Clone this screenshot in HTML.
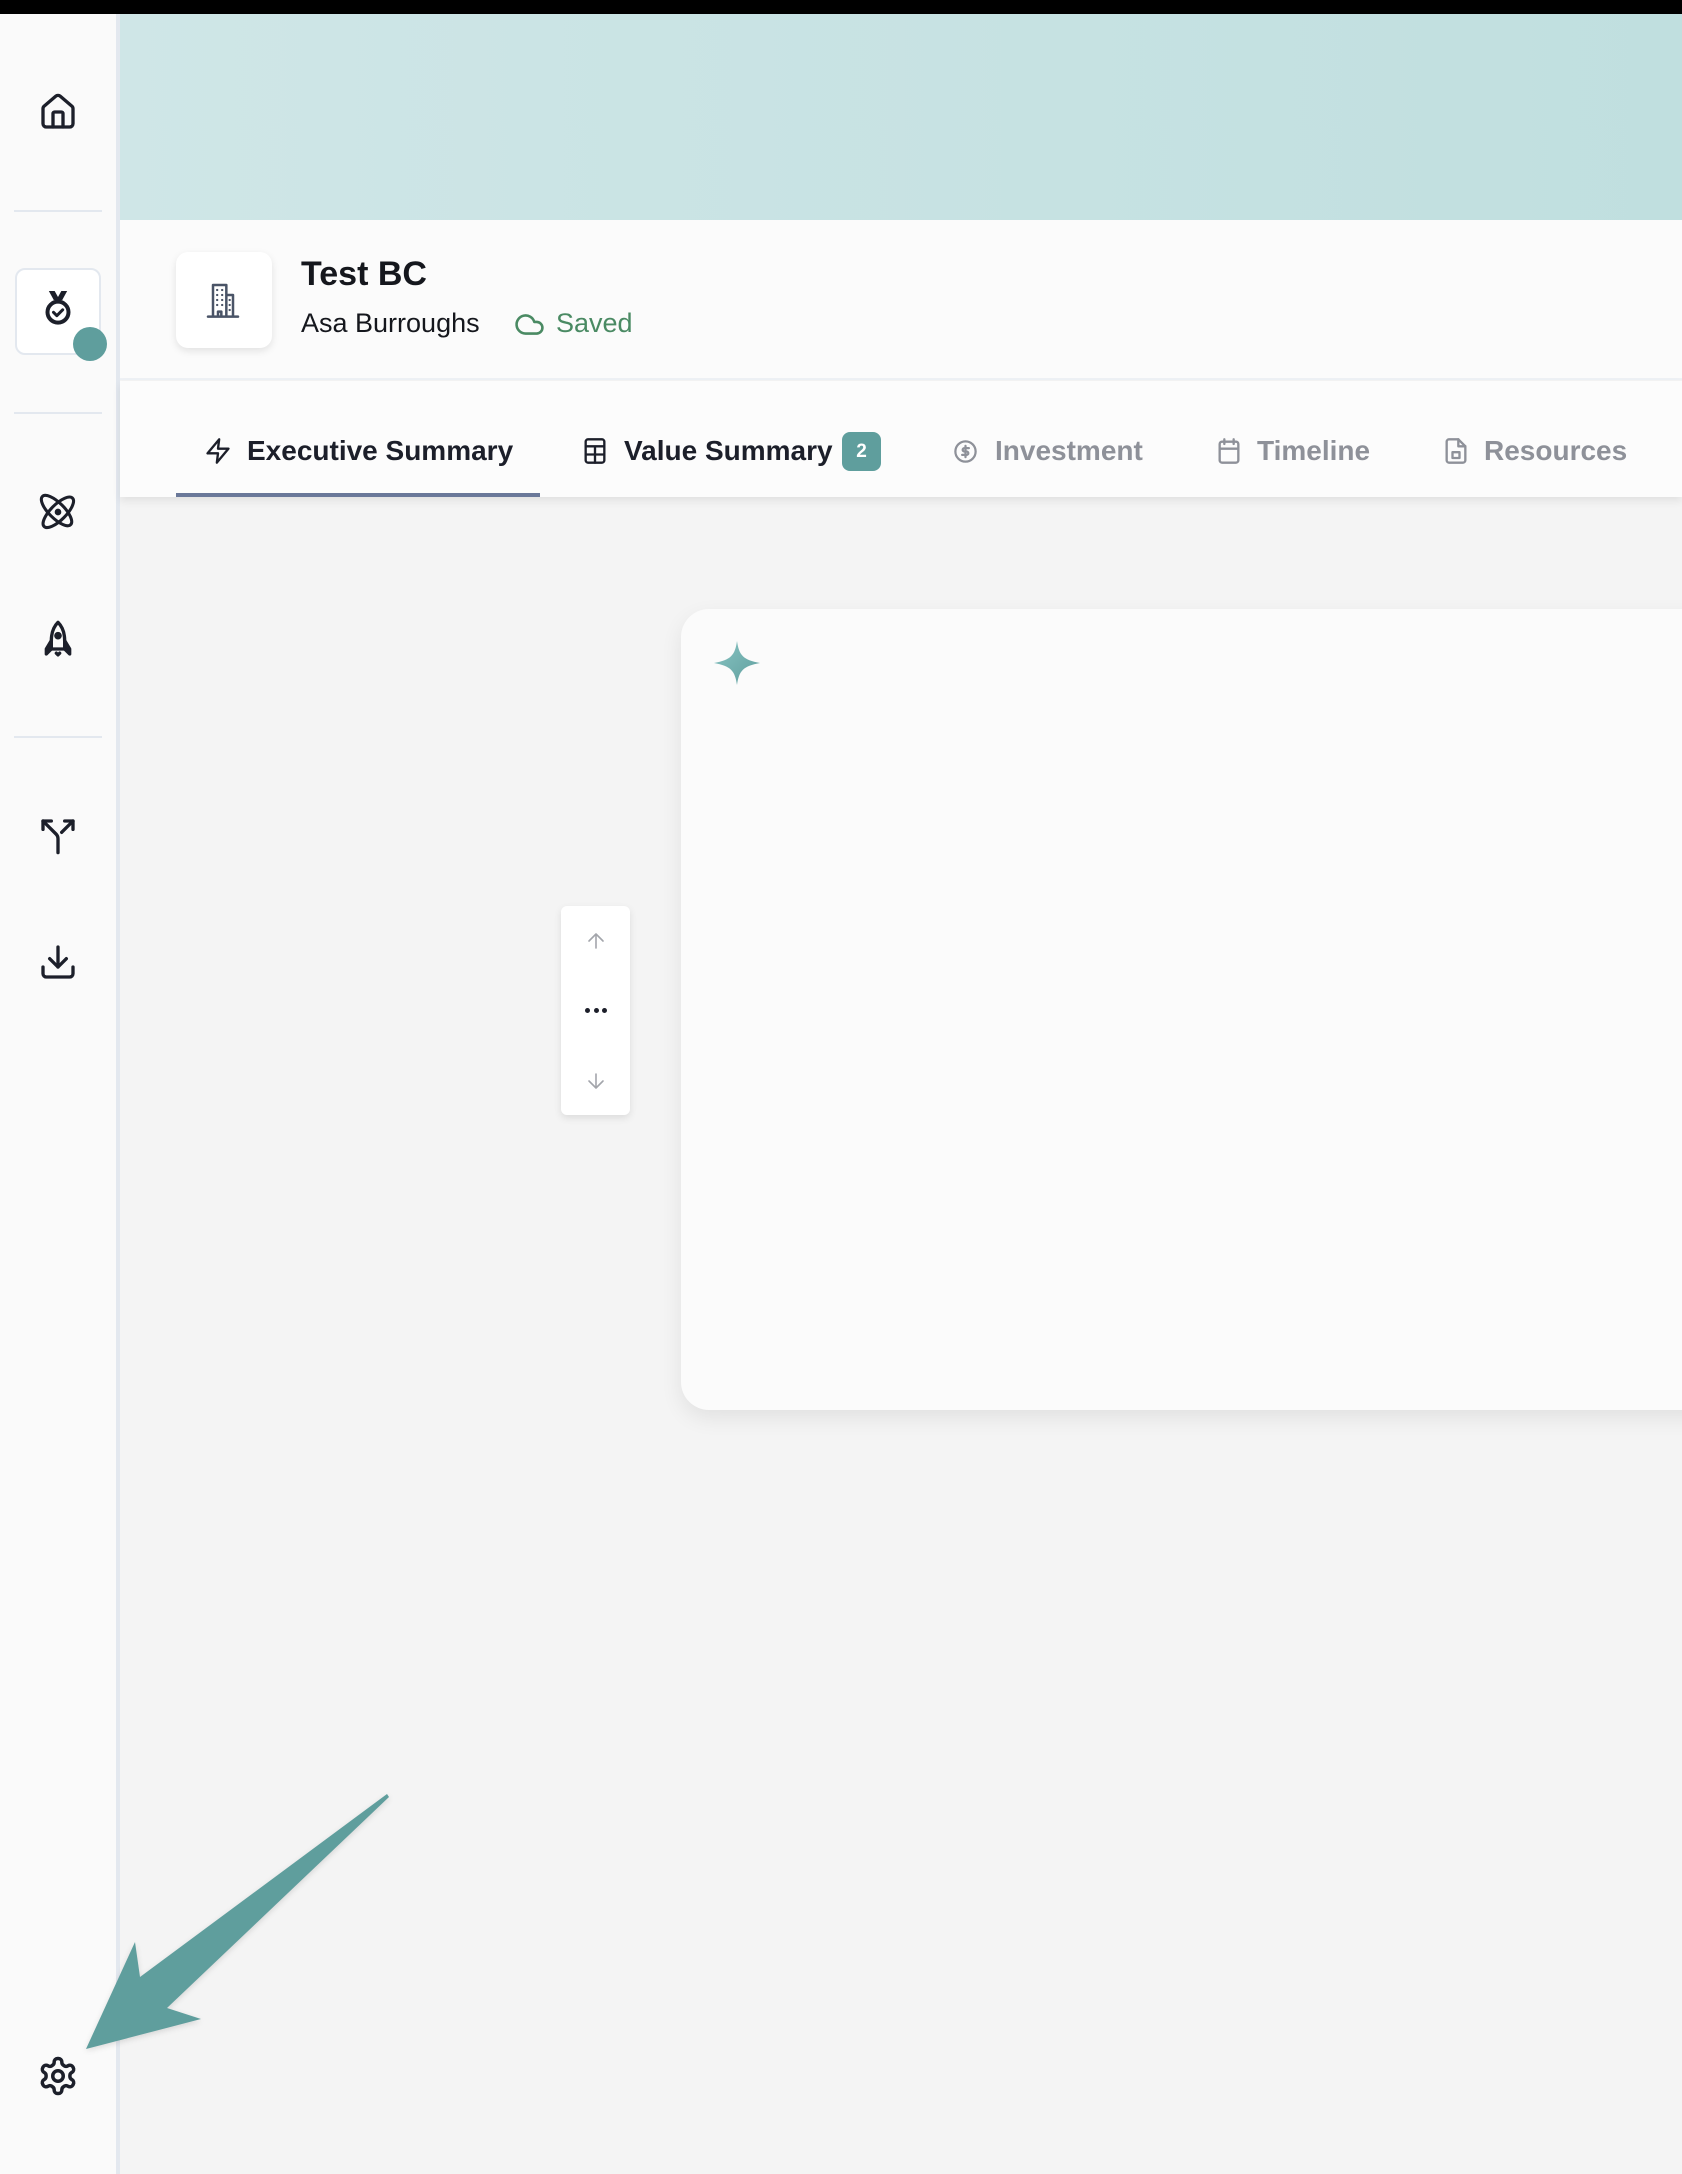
<!DOCTYPE html>
<html><head><meta charset="utf-8"><style>
*{margin:0;padding:0;box-sizing:border-box}
body{width:1682px;height:2174px;position:relative;overflow:hidden;background:#f4f4f4;font-family:"Liberation Sans",sans-serif}
.abs{position:absolute}
.topbar{left:0;top:0;width:1682px;height:14px;background:#000}
.side{left:0;top:14px;width:116px;height:2160px;background:#fafafa}
.sideb{left:116px;top:14px;width:4px;height:2160px;background:#e3e8ef}
.banner{left:120px;top:14px;width:1562px;height:206px;background:linear-gradient(90deg,#cfe6e7,#c0dfdf)}
.header{left:120px;top:220px;width:1562px;height:160px;background:#fbfbfb;border-bottom:2px solid #eef1f5}
.tabs{left:120px;top:381px;width:1562px;height:116px;background:#fcfcfc;box-shadow:0 4px 8px rgba(0,0,0,.08)}
.div{height:2px;background:#e3e8ef;left:14px;width:88px}
svg.i{position:absolute;fill:none;stroke:#1c1f2a;stroke-width:2;stroke-linecap:round;stroke-linejoin:round}
.tab{position:absolute;top:431px;font-size:28px;font-weight:bold;line-height:40px;white-space:nowrap}
</style></head><body>
<div class="abs topbar"></div>
<div class="abs side"></div>
<div class="abs sideb"></div>
<div class="abs banner"></div>
<div class="abs header"></div>
<div class="abs tabs"></div>

<!-- sidebar -->
<svg class="i" style="left:38px;top:92px" width="40" height="40" viewBox="0 0 24 24"><path d="M15 21v-8a1 1 0 0 0-1-1h-4a1 1 0 0 0-1 1v8"/><path d="M3 10a2 2 0 0 1 .7-1.5l7-6a2 2 0 0 1 2.6 0l7 6a2 2 0 0 1 .7 1.5v9a2 2 0 0 1-2 2H5a2 2 0 0 1-2-2z"/></svg>
<div class="abs div" style="top:210px"></div>
<div class="abs" style="left:15px;top:268px;width:86px;height:87px;border:2px solid #e3e8ef;border-radius:10px;background:#fff"></div>
<svg class="abs" style="left:38px;top:288px" width="40" height="40" viewBox="0 0 24 24"><path d="M6.5 1.8h3.5l2 3.6 2-3.6h3.5l-3 5.5h-5z" fill="#1c1f2a"/><circle cx="12" cy="14.5" r="6.3" fill="none" stroke="#1c1f2a" stroke-width="2.4"/><path d="M9.3 14.6l2 2 3.5-3.5" fill="none" stroke="#1c1f2a" stroke-width="1.8" stroke-linecap="round" stroke-linejoin="round"/></svg>
<div class="abs" style="left:73px;top:327px;width:34px;height:34px;border-radius:50%;background:#5f9e9d"></div>
<div class="abs div" style="top:412px"></div>
<svg class="i" style="left:38px;top:492px" width="40" height="40" viewBox="0 0 24 24"><circle cx="12" cy="12" r="1"/><path d="M20.2 20.2c2-2-.5-7.7-5.7-12.8C9.3 2.3 3.8-.2 1.8 1.8c-2 2 .5 7.7 5.7 12.8s10.8 7.7 12.7 5.6z" transform="translate(1 1) scale(.92)"/><path d="M15.7 15.7c5.2-5.2 7.7-10.8 5.7-12.8s-7.7.5-12.8 5.7-7.7 10.8-5.7 12.8 7.6-.5 12.8-5.7z" transform="translate(1 1) scale(.92)"/></svg>
<svg class="i" style="left:38px;top:619px" width="40" height="40" viewBox="0 0 24 24"><path d="M12 2c-3 3-4 7-4 11v5h8v-5c0-4-1-8-4-11z"/><path d="M8 13l-3 5v3l3-3M16 13l3 5v3l-3-3" fill="#1c1f2a"/><circle cx="12" cy="10" r="1.3" fill="#1c1f2a"/><path d="M11 20.5l1 1 1-1"/></svg>
<div class="abs div" style="top:736px"></div>
<svg class="i" style="left:38px;top:816px" width="40" height="40" viewBox="0 0 24 24"><path d="M16 3h5v5M8 3H3v5"/><path d="M12 22v-8.3a4 4 0 0 0-1.2-2.9L3 3M21 3l-6.8 6.8"/></svg>
<svg class="i" style="left:38px;top:942px" width="40" height="40" viewBox="0 0 24 24"><path d="M12 15V3M21 15v4a2 2 0 0 1-2 2H5a2 2 0 0 1-2-2v-4"/><path d="M7 10l5 5 5-5"/></svg>
<svg class="i" style="left:37px;top:2055px" width="42" height="42" viewBox="0 0 24 24"><path d="M12.2 2h-.4a2 2 0 0 0-2 2v.2a2 2 0 0 1-1 1.7l-.4.3a2 2 0 0 1-2 0l-.2-.1a2 2 0 0 0-2.7.7l-.2.4a2 2 0 0 0 .7 2.7l.2.1a2 2 0 0 1 1 1.7v.5a2 2 0 0 1-1 1.8l-.2.1a2 2 0 0 0-.7 2.7l.2.4a2 2 0 0 0 2.7.7l.2-.1a2 2 0 0 1 2 0l.4.3a2 2 0 0 1 1 1.7V20a2 2 0 0 0 2 2h.4a2 2 0 0 0 2-2v-.2a2 2 0 0 1 1-1.7l.4-.3a2 2 0 0 1 2 0l.2.1a2 2 0 0 0 2.7-.7l.2-.4a2 2 0 0 0-.7-2.7l-.2-.1a2 2 0 0 1-1-1.8v-.5a2 2 0 0 1 1-1.7l.2-.1a2 2 0 0 0 .7-2.7l-.2-.4a2 2 0 0 0-2.7-.7l-.2.1a2 2 0 0 1-2 0l-.4-.3a2 2 0 0 1-1-1.7V4a2 2 0 0 0-2-2z"/><circle cx="12" cy="12" r="3"/></svg>

<!-- header -->
<div class="abs" style="left:176px;top:252px;width:96px;height:96px;background:#fff;border-radius:12px;box-shadow:0 3px 8px rgba(0,0,0,.1)"></div>
<svg class="i" style="left:203px;top:280px;stroke:#4a5467;stroke-width:1.5" width="40" height="40" viewBox="0 0 24 24"><path d="M6 22V3h8v19M14 9h4v13M3 22h18M9 22v-3h2v3"/><path d="M8.5 6h.01M11.5 6h.01M8.5 9h.01M11.5 9h.01M8.5 12h.01M11.5 12h.01M8.5 15h.01M11.5 15h.01M16 12h.01M16 15h.01M16 18h.01" stroke-width="1.4"/></svg>
<div class="abs" style="left:301px;top:254px;font-size:34px;font-weight:bold;color:#15171d;line-height:40px">Test BC</div>
<div class="abs" style="left:301px;top:307px;font-size:27px;color:#15171d;line-height:32px">Asa Burroughs</div>
<svg class="i" style="left:514px;top:309px;stroke:#4a8a63" width="31" height="31" viewBox="0 0 24 24"><path d="M17.5 19H9a7 7 0 1 1 6.7-9h1.8a4.5 4.5 0 1 1 0 9z"/></svg>
<div class="abs" style="left:556px;top:307px;font-size:27px;color:#4a8a63;line-height:32px">Saved</div>

<!-- tabs -->
<svg class="i" style="left:204px;top:437px" width="28" height="28" viewBox="0 0 24 24"><path d="M13 2L3 14h9l-1 8 10-12h-9l1-8z"/></svg>
<div class="tab" style="left:247px;color:#1c1f2a">Executive Summary</div>
<div class="abs" style="left:176px;top:493px;width:364px;height:4px;background:#6a7899"></div>
<svg class="i" style="left:581px;top:437px" width="28" height="28" viewBox="0 0 24 24"><rect x="4" y="2" width="16" height="20" rx="2"/><path d="M4 8h16M4 15h16M12 8v14"/></svg>
<div class="tab" style="left:624px;color:#1c1f2a">Value Summary</div>
<div class="abs" style="left:842px;top:432px;width:39px;height:39px;border-radius:8px;background:#5f9e9d;color:#fff;font-weight:bold;font-size:19px;text-align:center;line-height:39px">2</div>
<svg class="i" style="left:952px;top:438px;stroke:#8e9199" width="27" height="27" viewBox="0 0 24 24"><circle cx="12" cy="12" r="9"/><path d="M15 9h-4a1.5 1.5 0 0 0 0 3h2a1.5 1.5 0 0 1 0 3H9M12 7v10"/></svg>
<div class="tab" style="left:995px;color:#8e9199">Investment</div>
<svg class="i" style="left:1215px;top:437px;stroke:#8e9199" width="28" height="28" viewBox="0 0 24 24"><rect x="4" y="4" width="16" height="18" rx="2"/><path d="M8 2v4M16 2v4M4 10h16"/></svg>
<div class="tab" style="left:1257px;color:#8e9199">Timeline</div>
<svg class="i" style="left:1442px;top:437px;stroke:#8e9199" width="28" height="28" viewBox="0 0 24 24"><path d="M14 2H6a2 2 0 0 0-2 2v16a2 2 0 0 0 2 2h12a2 2 0 0 0 2-2V8z"/><path d="M14 2v6h6"/><rect x="9" y="13" width="6" height="5"/></svg>
<div class="tab" style="left:1484px;color:#8e9199">Resources</div>

<!-- scroll control -->
<div class="abs" style="left:561px;top:906px;width:69px;height:209px;background:#fff;border-radius:6px;box-shadow:0 3px 8px rgba(0,0,0,.1)"></div>
<svg class="i" style="left:584px;top:929px;stroke:#a3a5ab;stroke-width:1.6" width="24" height="24" viewBox="0 0 24 24"><path d="M12 19V5M5 12l7-7 7 7"/></svg>
<div class="abs" style="left:585px;top:1008px;width:22px;height:5px;display:flex;justify-content:space-between"><i style="width:5px;height:5px;border-radius:50%;background:#1c1f2a"></i><i style="width:5px;height:5px;border-radius:50%;background:#1c1f2a"></i><i style="width:5px;height:5px;border-radius:50%;background:#1c1f2a"></i></div>
<svg class="i" style="left:584px;top:1069px;stroke:#a3a5ab;stroke-width:1.6" width="24" height="24" viewBox="0 0 24 24"><path d="M12 5v14M19 12l-7 7-7-7"/></svg>

<!-- card -->
<div class="abs" style="left:681px;top:609px;width:1060px;height:801px;background:#fbfbfb;border-radius:28px;box-shadow:0 8px 22px rgba(0,0,0,.08)"></div>
<svg class="abs" style="left:713px;top:640px" width="48" height="46" viewBox="0 0 48 46"><defs><linearGradient id="g" x1="0" y1="0" x2="1" y2="1"><stop offset="0" stop-color="#88c4c3"/><stop offset="1" stop-color="#5f9e9d"/></linearGradient></defs><path d="M24 1C26 15 30 20 47 23 30 26 26 31 24 45 22 31 18 26 1 23 18 20 22 15 24 1z" fill="url(#g)"/></svg>

<!-- arrow -->
<svg class="abs" style="left:0;top:0;filter:drop-shadow(0 2px 3px rgba(0,0,0,.12))" width="1682" height="2174"><polygon points="387,1794 389,1797 167,2008 201,2019 86,2049 135,1942 140,1977" fill="#5f9e9d"/></svg>
</body></html>
